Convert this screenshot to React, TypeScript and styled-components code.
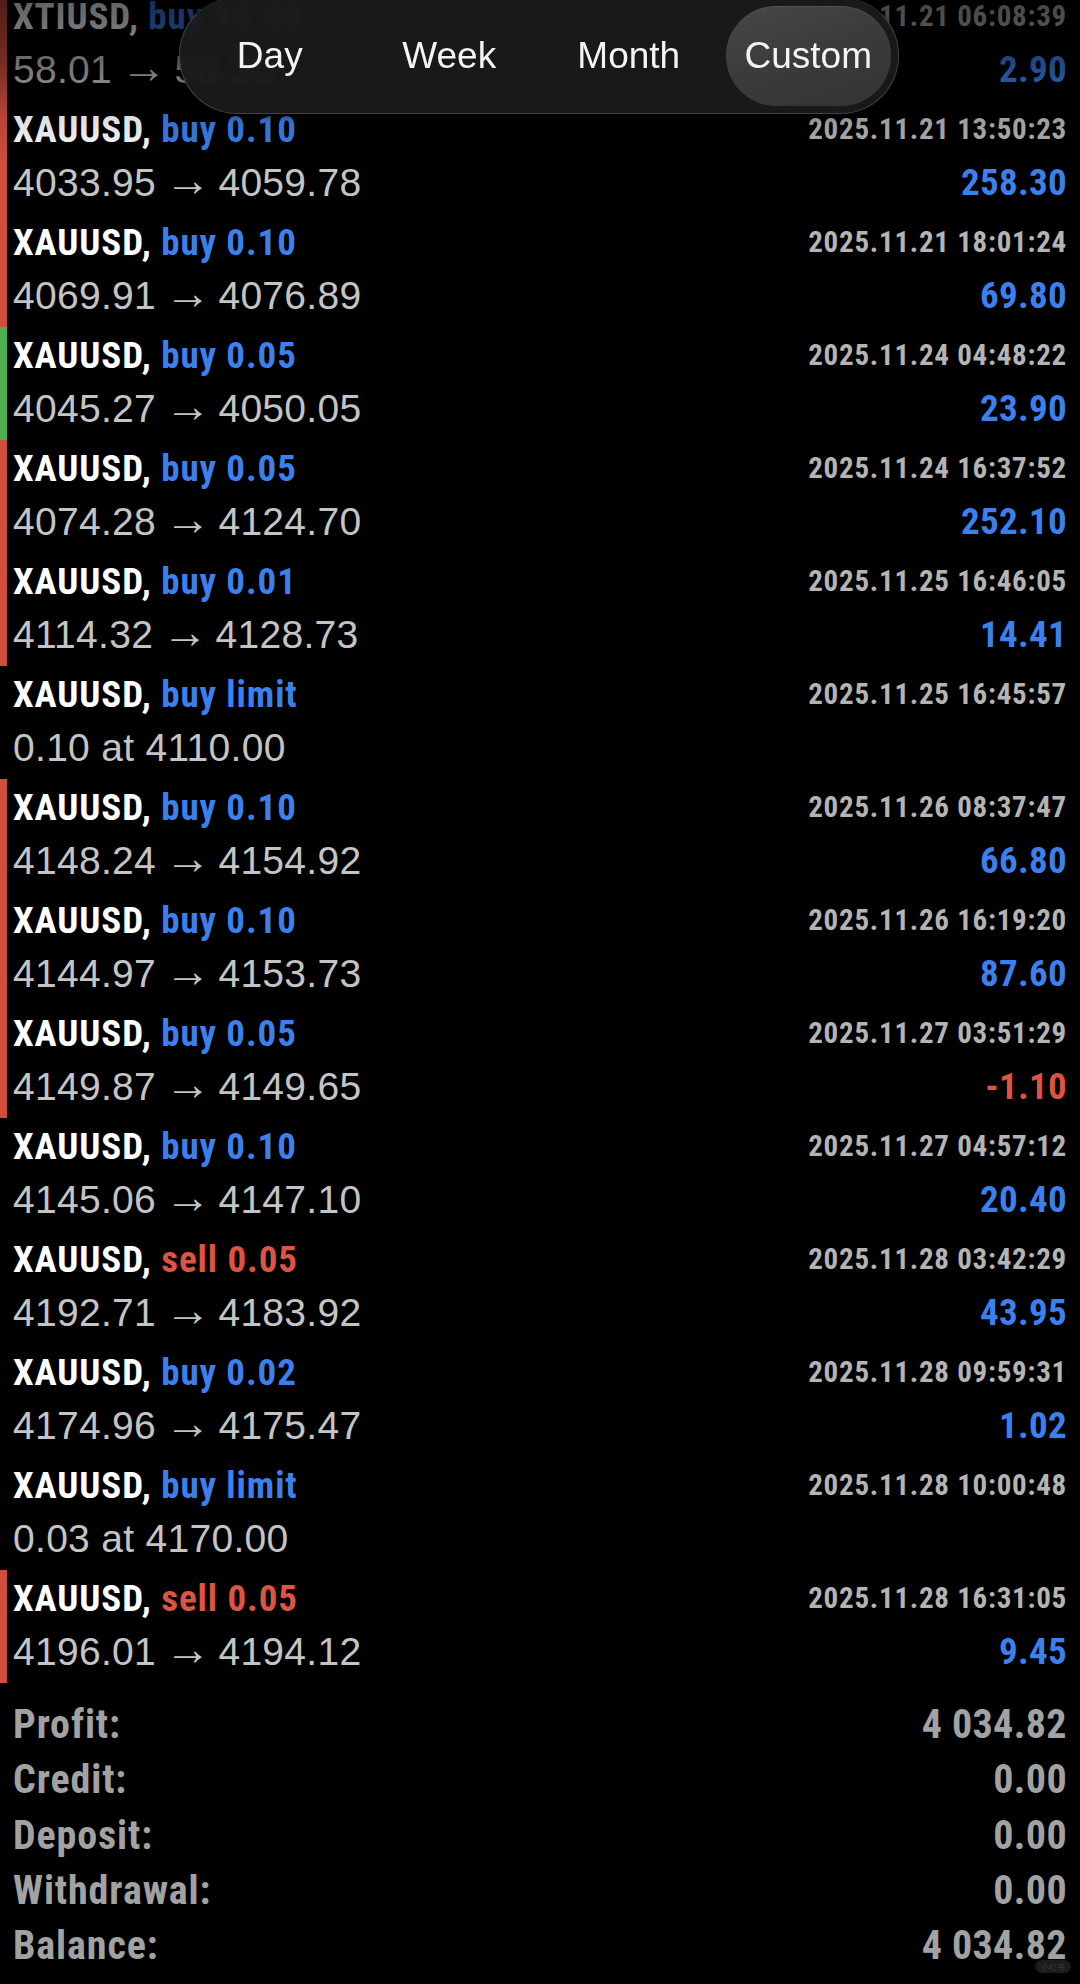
import React from "react";
import styled, { createGlobalStyle } from "styled-components";

const GlobalStyle = createGlobalStyle`
  html, body {
    margin: 0;
    padding: 0;
    background: #000;
  }
  * {
    box-sizing: border-box;
  }
`;

const NARROW = `Roboto, "Liberation Sans", sans-serif`;
const REGULAR = `"Liberation Sans", Arial, sans-serif`;

const BLUE = "#3b80ec";
const RED = "#de5440";
const BAR_RED = "#d24e3c";
const BAR_GREEN = "#4fb04f";

type Deal = {
  symbol: string;
  side: "buy" | "sell";
  volume: string;
  detail: string;
  time: string;
  profit?: string;
  bar?: "loss" | "win";
};

const DEALS: Deal[] = [
  { symbol: "XTIUSD", side: "buy", volume: "10.00", detail: "58.01 → 58.30", time: "2025.11.21 06:08:39", profit: "2.90", bar: "loss" },
  { symbol: "XAUUSD", side: "buy", volume: "0.10", detail: "4033.95 → 4059.78", time: "2025.11.21 13:50:23", profit: "258.30", bar: "loss" },
  { symbol: "XAUUSD", side: "buy", volume: "0.10", detail: "4069.91 → 4076.89", time: "2025.11.21 18:01:24", profit: "69.80", bar: "loss" },
  { symbol: "XAUUSD", side: "buy", volume: "0.05", detail: "4045.27 → 4050.05", time: "2025.11.24 04:48:22", profit: "23.90", bar: "win" },
  { symbol: "XAUUSD", side: "buy", volume: "0.05", detail: "4074.28 → 4124.70", time: "2025.11.24 16:37:52", profit: "252.10", bar: "loss" },
  { symbol: "XAUUSD", side: "buy", volume: "0.01", detail: "4114.32 → 4128.73", time: "2025.11.25 16:46:05", profit: "14.41", bar: "loss" },
  { symbol: "XAUUSD", side: "buy", volume: "limit", detail: "0.10 at 4110.00", time: "2025.11.25 16:45:57" },
  { symbol: "XAUUSD", side: "buy", volume: "0.10", detail: "4148.24 → 4154.92", time: "2025.11.26 08:37:47", profit: "66.80", bar: "loss" },
  { symbol: "XAUUSD", side: "buy", volume: "0.10", detail: "4144.97 → 4153.73", time: "2025.11.26 16:19:20", profit: "87.60", bar: "loss" },
  { symbol: "XAUUSD", side: "buy", volume: "0.05", detail: "4149.87 → 4149.65", time: "2025.11.27 03:51:29", profit: "-1.10", bar: "loss" },
  { symbol: "XAUUSD", side: "buy", volume: "0.10", detail: "4145.06 → 4147.10", time: "2025.11.27 04:57:12", profit: "20.40" },
  { symbol: "XAUUSD", side: "sell", volume: "0.05", detail: "4192.71 → 4183.92", time: "2025.11.28 03:42:29", profit: "43.95" },
  { symbol: "XAUUSD", side: "buy", volume: "0.02", detail: "4174.96 → 4175.47", time: "2025.11.28 09:59:31", profit: "1.02" },
  { symbol: "XAUUSD", side: "buy", volume: "limit", detail: "0.03 at 4170.00", time: "2025.11.28 10:00:48" },
  { symbol: "XAUUSD", side: "sell", volume: "0.05", detail: "4196.01 → 4194.12", time: "2025.11.28 16:31:05", profit: "9.45", bar: "loss" },
];

const SUMMARY = [
  ["Profit:", "4 034.82"],
  ["Credit:", "0.00"],
  ["Deposit:", "0.00"],
  ["Withdrawal:", "0.00"],
  ["Balance:", "4 034.82"],
];

const PERIODS = ["Day", "Week", "Month", "Custom"];

const Screen = styled.div`
  position: relative;
  width: 1080px;
  min-height: 1984px;
  background: #000;
  overflow: hidden;
`;

const TopFade = styled.div`
  position: absolute;
  top: 0;
  left: 0;
  right: 0;
  height: 170px;
  background: linear-gradient(
    to bottom,
    rgba(0, 0, 0, 0.62) 0px,
    rgba(0, 0, 0, 0.45) 60px,
    rgba(0, 0, 0, 0.12) 120px,
    rgba(0, 0, 0, 0) 170px
  );
  pointer-events: none;
  z-index: 1;
`;

const PeriodSwitch = styled.div`
  position: absolute;
  top: -3px;
  left: 179px;
  width: 720px;
  height: 117px;
  display: flex;
  align-items: center;
  border-radius: 58px;
  background: rgba(27, 27, 27, 0.93);
  backdrop-filter: blur(3px);
  border: 1.5px solid rgba(72, 72, 72, 0.9);
  border-top-color: rgba(40, 40, 40, 0.9);
  box-shadow: 0 2px 6px rgba(0, 0, 0, 0.6);
  z-index: 2;
`;

const Segment = styled.div<{ $active?: boolean }>`
  flex: 1;
  margin: 0 7px;
  height: 100px;
  display: flex;
  align-items: center;
  justify-content: center;
  border-radius: 50px;
  font-family: ${REGULAR};
  font-size: 37px;
  color: #f4f4f4;
  background: ${(p) =>
    p.$active ? "linear-gradient(160deg, #474747 0%, #3a3a3a 55%, #343434 100%)" : "transparent"};
  box-shadow: ${(p) => (p.$active ? "inset 0 1px 1px rgba(255,255,255,0.08)" : "none")};
`;

const List = styled.div`
  margin-top: -12px;
`;

const Row = styled.div<{ $bar?: string }>`
  height: 113px;
  padding: 2px 13px 5px 6px;
  border-left: 7px solid ${(p) => p.$bar || "transparent"};
`;

const Line = styled.div`
  display: flex;
  justify-content: space-between;
  height: 53px;
  white-space: nowrap;
`;

const Title = styled.div`
  font-family: ${NARROW};
  font-stretch: condensed;
  font-weight: 700;
  font-size: 37px;
  line-height: 53px;
  letter-spacing: 0.9px;
  color: #fff;
`;

const Side = styled.span<{ $sell?: boolean }>`
  color: ${(p) => (p.$sell ? RED : BLUE)};
`;

const Time = styled.div`
  font-family: ${NARROW};
  font-stretch: condensed;
  font-weight: 700;
  font-size: 29px;
  line-height: 53px;
  letter-spacing: 0.75px;
  color: #b4b4b4;
`;

const Detail = styled.div`
  font-family: ${REGULAR};
  font-size: 39px;
  line-height: 53px;
  letter-spacing: 0.3px;
  color: #c4c4c4;
`;

const Arrow = styled.span`
  font-family: ${REGULAR};
  font-size: 46px;
  line-height: 0;
  margin: 0 7px 0 9px;
`;

const Profit = styled.div<{ $negative?: boolean }>`
  font-family: ${NARROW};
  font-stretch: condensed;
  font-weight: 700;
  font-size: 37px;
  line-height: 53px;
  letter-spacing: 0.3px;
  color: ${(p) => (p.$negative ? RED : BLUE)};
`;

const Summary = styled.div`
  padding: 14px 13px 0 13px;
`;

const SummaryRow = styled.div`
  display: flex;
  justify-content: space-between;
  font-family: ${NARROW};
  font-stretch: condensed;
  font-weight: 700;
  font-size: 40px;
  line-height: 55.3px;
  color: #a2a2a2;
`;

const SummaryLabel = styled.span`
  letter-spacing: 0.9px;
`;

const SummaryValue = styled.span`
  letter-spacing: 0.4px;
`;

const Watermark = styled.div`
  position: absolute;
  left: 1035px;
  top: 1960px;
  width: 36px;
  height: 13px;
  border-radius: 7px;
  background: #1b1b1b;
  color: #3d3d3d;
  font-family: "Noto Sans CJK SC", sans-serif;
  font-size: 8px;
  line-height: 13px;
  text-align: center;
`;

const barColor = (bar?: Deal["bar"]) =>
  bar === "win" ? BAR_GREEN : bar === "loss" ? BAR_RED : undefined;

const DetailText: React.FC<{ text: string }> = ({ text }) => {
  const parts = text.split(" → ");
  if (parts.length < 2) return <Detail>{text}</Detail>;
  return (
    <Detail>
      {parts[0]}
      <Arrow>→</Arrow>
      {parts[1]}
    </Detail>
  );
};

const DealRow: React.FC<{ deal: Deal }> = ({ deal }) => (
  <Row $bar={barColor(deal.bar)}>
    <Line>
      <Title>
        {deal.symbol}, <Side $sell={deal.side === "sell"}>{deal.side} {deal.volume}</Side>
      </Title>
      <Time>{deal.time}</Time>
    </Line>
    <Line>
      <DetailText text={deal.detail} />
      {deal.profit && <Profit $negative={deal.profit.startsWith("-")}>{deal.profit}</Profit>}
    </Line>
  </Row>
);

export default function App() {
  return (
    <>
      <GlobalStyle />
      <Screen>
        <TopFade />
        <PeriodSwitch>
          {PERIODS.map((p) => (
            <Segment key={p} $active={p === "Custom"}>
              {p}
            </Segment>
          ))}
        </PeriodSwitch>
        <List>
          {DEALS.map((d, i) => (
            <DealRow key={i} deal={d} />
          ))}
        </List>
        <Summary>
          {SUMMARY.map(([label, value]) => (
            <SummaryRow key={label}>
              <SummaryLabel>{label}</SummaryLabel>
              <SummaryValue>{value}</SummaryValue>
            </SummaryRow>
          ))}
        </Summary>
        <Watermark>小红书</Watermark>
      </Screen>
    </>
  );
}
